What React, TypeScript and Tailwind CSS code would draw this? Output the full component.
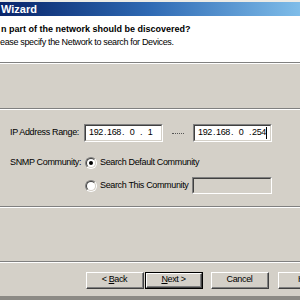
import React from "react";

const Sunken = ({ className, children }: { className: string; children?: React.ReactNode }) => (
  <div className={`shrink-0 border-t border-l border-t-[#808080] border-l-[#808080] border-b border-r border-b-white border-r-white ${className}`}>
    <div className="w-full h-full border-t border-l border-t-[#404040] border-l-[#404040] border-b border-r border-b-[#d4d0c8] border-r-[#d4d0c8] flex items-center">
      {children}
    </div>
  </div>
);

const IpBox = ({ parts, caret }: { parts: string[]; caret?: boolean }) => (
  <Sunken className="w-[79px] h-[18px] bg-white">
    <div className="flex items-center pl-[3px] text-black">
      {parts.map((p, i) => (
        <React.Fragment key={i}>
          <span className="w-[14px] shrink-0 text-center">{p}</span>
          {i < 3 && <span className="w-[4px] shrink-0 text-center">.</span>}
        </React.Fragment>
      ))}
      {caret && <span className="w-px h-[12px] bg-black"></span>}
    </div>
  </Sunken>
);

const Radio = ({ checked }: { checked?: boolean }) => (
  <div className="w-[12px] h-[12px] shrink-0 rounded-full border border-t-[#808080] border-l-[#808080] border-b-white border-r-white">
    <div className="w-full h-full rounded-full border border-t-[#404040] border-l-[#404040] border-b-[#d4d0c8] border-r-[#d4d0c8] bg-white flex items-center justify-center">
      {checked && <div className="w-[4px] h-[4px] rounded-full bg-black"></div>}
    </div>
  </div>
);

const Btn = ({ children, isDefault }: { children: React.ReactNode; isDefault?: boolean }) => (
  <div className={`w-[58px] h-[17px] shrink-0 ${isDefault ? "border border-black" : ""}`}>
    <div className="w-full h-full border-t border-l border-t-white border-l-white border-b border-r border-b-[#404040] border-r-[#404040]">
      <div className="w-full h-full border-b border-r border-b-[#808080] border-r-[#808080] flex items-center justify-center whitespace-nowrap">
        {children}
      </div>
    </div>
  </div>
);

const Separator = () => (
  <div className="shrink-0">
    <div className="h-px bg-[#808080]"></div>
    <div className="h-px bg-white"></div>
  </div>
);

export default function App() {
  return (
    <div className="w-[300px] h-[300px] overflow-hidden bg-[#d4d0c8] flex flex-col font-['Liberation_Sans',Arial,sans-serif] text-[9px] tracking-[-0.35px] text-black">
      <div className="h-[2px] shrink-0 bg-[#ecebe6]"></div>
      <div className="h-[14px] shrink-0 bg-gradient-to-r from-[#0a246a] via-[#2f6ab4] to-[#7fbde9] text-white font-bold text-[11px] tracking-normal leading-[14px] pl-px">
        Wizard
      </div>
      <div className="h-[46px] shrink-0 bg-white pt-[7px]">
        <div className="font-bold leading-[13px] tracking-normal pl-px">n part of the network should be discovered?</div>
        <div className="leading-[12px]">ease specify the Network to search for Devices.</div>
      </div>
      <Separator />
      <div className="h-[44px] shrink-0"></div>
      <Separator />

      <div className="h-[14px] shrink-0"></div>
      <div className="flex items-center h-[18px] shrink-0">
        <span className="w-[84px] shrink-0 pl-[10px] whitespace-nowrap">IP Address Range:</span>
        <IpBox parts={["192", "168", "0", "1"]} />
        <div className="w-[12px] shrink-0 ml-[9px] mr-[9px] border-t border-dotted border-[#555]"></div>
        <IpBox parts={["192", "168", "0", "254"]} caret />
      </div>

      <div className="h-[13px] shrink-0"></div>
      <div className="flex items-center h-[16px] shrink-0">
        <span className="w-[85px] shrink-0 pl-[10px] whitespace-nowrap">SNMP Community:</span>
        <Radio checked />
        <span className="ml-[3px] whitespace-nowrap">Search Default Community</span>
      </div>
      <div className="h-[6px] shrink-0"></div>
      <div className="flex items-center h-[17px] shrink-0">
        <div className="w-[85px] shrink-0"></div>
        <Radio />
        <span className="ml-[3px] w-[92px] shrink-0 whitespace-nowrap">Search This Community</span>
        <Sunken className="w-[80px] h-[17px] bg-[#d4d0c8]" />
      </div>

      <div className="h-[12px] shrink-0"></div>
      <Separator />
      <div className="h-[53px] shrink-0"></div>
      <Separator />

      <div className="h-[9px] shrink-0"></div>
      <div className="flex items-center h-[17px] shrink-0 pl-[86px]">
        <Btn>
          &lt; <span className="underline ml-[2px]">B</span>ack
        </Btn>
        <div className="w-px shrink-0"></div>
        <Btn isDefault>
          <span className="underline">N</span>ext &gt;
        </Btn>
        <div className="w-[8px] shrink-0"></div>
        <Btn>Cancel</Btn>
        <div className="w-[9px] shrink-0"></div>
        <Btn>Help</Btn>
      </div>
      <div className="flex-1"></div>
      <div className="h-[4px] shrink-0 bg-[#8c8a85]"></div>
    </div>
  );
}
